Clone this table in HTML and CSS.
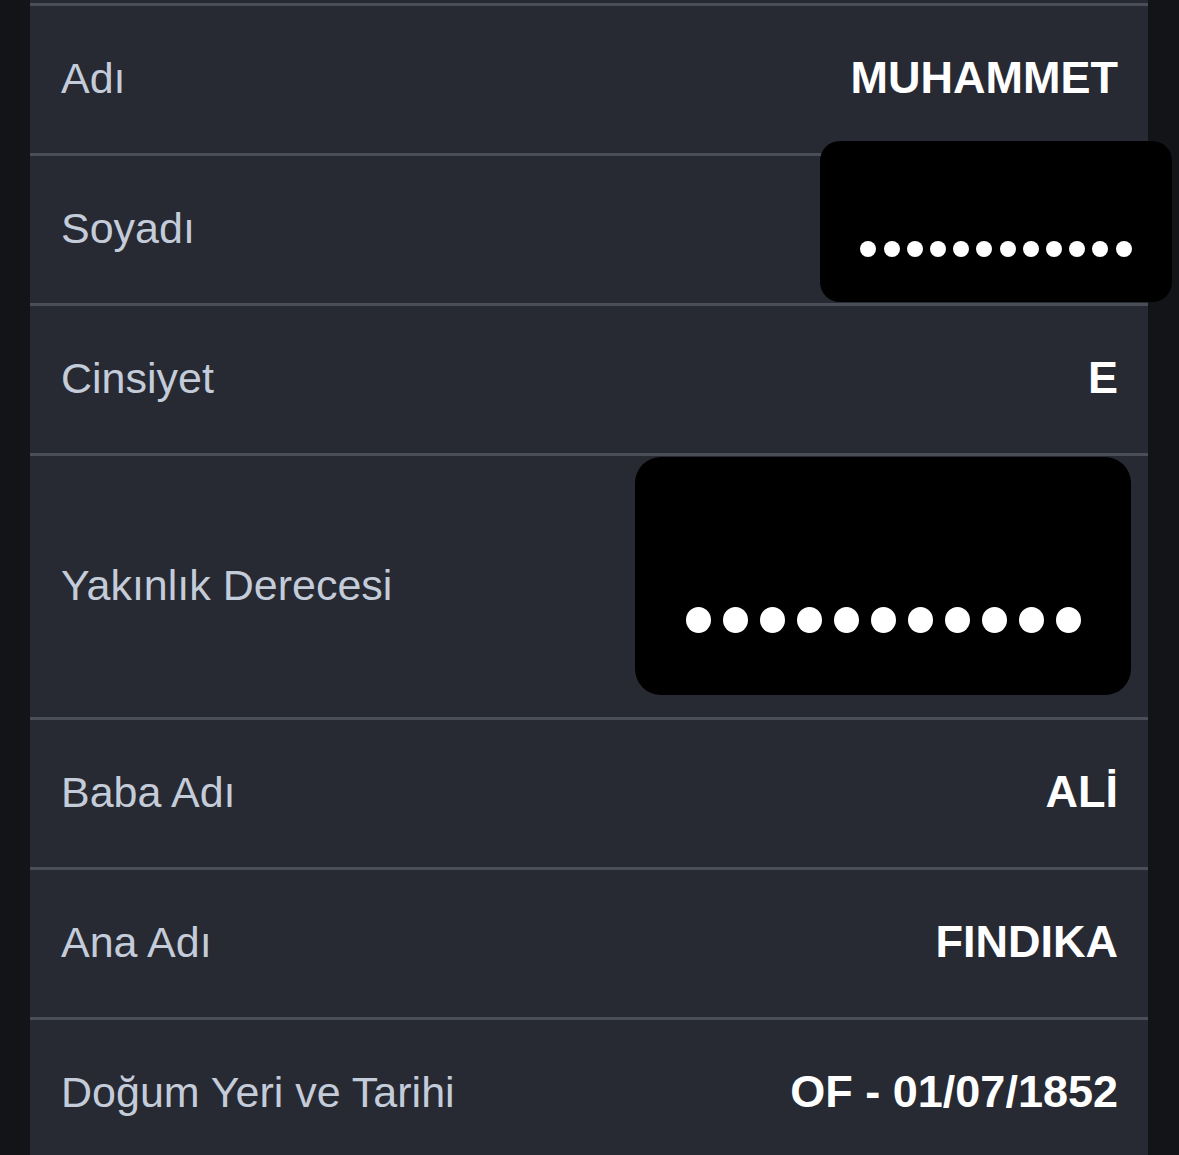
FILE: index.html
```html
<!DOCTYPE html>
<html lang="tr">
<head>
<meta charset="utf-8">
<title>Kimlik Bilgileri</title>
<link rel="stylesheet" href="styles.css">
</head>
<body>
<div class="page">
  <div class="panel">
    <div class="row">
      <span class="label">Adı</span>
      <span class="value">MUHAMMET</span>
    </div>
    <div class="row">
      <span class="label">Soyadı</span>
      <span class="value"></span>
      <div class="redact redact-sm">
        <span class="dot"></span><span class="dot"></span><span class="dot"></span><span class="dot"></span><span class="dot"></span><span class="dot"></span><span class="dot"></span><span class="dot"></span><span class="dot"></span><span class="dot"></span><span class="dot"></span><span class="dot"></span>
      </div>
    </div>
    <div class="row">
      <span class="label">Cinsiyet</span>
      <span class="value">E</span>
    </div>
    <div class="row row-tall">
      <span class="label">Yakınlık Derecesi</span>
      <span class="value"></span>
      <div class="redact redact-lg">
        <span class="dot"></span><span class="dot"></span><span class="dot"></span><span class="dot"></span><span class="dot"></span><span class="dot"></span><span class="dot"></span><span class="dot"></span><span class="dot"></span><span class="dot"></span><span class="dot"></span>
      </div>
    </div>
    <div class="row">
      <span class="label">Baba Adı</span>
      <span class="value">ALİ</span>
    </div>
    <div class="row">
      <span class="label">Ana Adı</span>
      <span class="value">FINDIKA</span>
    </div>
    <div class="row">
      <span class="label">Doğum Yeri ve Tarihi</span>
      <span class="value">OF - 01/07/1852</span>
    </div>
  </div>
</div>
</body>
</html>
```

FILE: styles.css
```css
html, body {
  margin: 0;
  padding: 0;
  background: #131418;
  height: 100%;
  overflow: hidden;
}

.page {
  padding-left: 30px;
  font-family: "Liberation Sans", Arial, Helvetica, sans-serif;
}

.panel {
  width: 1118px;
  background: #272a32;
  padding-top: 3px;
}

.row {
  position: relative;
  display: flex;
  align-items: center;
  justify-content: space-between;
  height: 144px;
  border-top: 3px solid #4a4e57;
  padding: 0 30px 3px 31px;
}

.row-tall {
  height: 258px;
}

.label {
  font-size: 43px;
  color: #c4ccda;
  font-weight: 400;
}

.value {
  font-size: 45px;
  color: #ffffff;
  font-weight: 700;
}

.redact {
  position: absolute;
  background: #000000;
  display: flex;
  justify-content: center;
  align-items: flex-start;
  box-sizing: border-box;
}

.redact-sm {
  left: 790px;
  top: -15px;
  width: 352px;
  height: 161px;
  border-radius: 20px;
  padding-top: 100px;
  gap: 7.2px;
}

.redact-sm .dot {
  width: 16px;
  height: 16px;
}

.redact-lg {
  left: 605px;
  top: 1px;
  width: 496px;
  height: 238px;
  border-radius: 26px;
  padding-top: 150px;
  gap: 12px;
}

.redact-lg .dot {
  width: 25px;
  height: 26px;
}

.dot {
  display: block;
  flex: none;
  background: #ffffff;
  border-radius: 50%;
}
```
